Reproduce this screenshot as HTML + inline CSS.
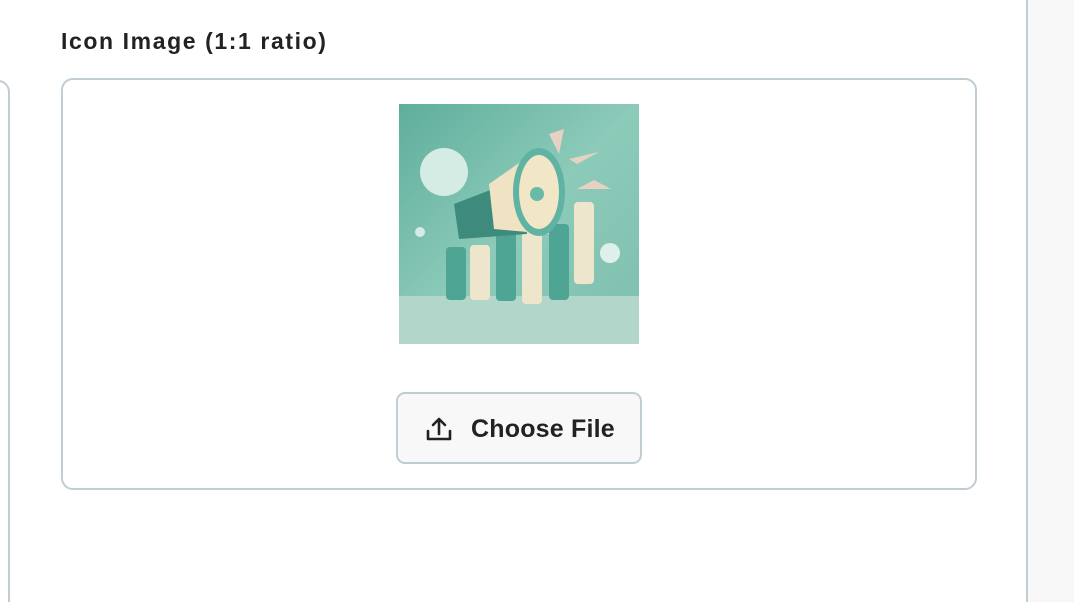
<!DOCTYPE html>
<html><head><meta charset="utf-8"><style>
html,body{margin:0;width:1074px;height:602px;overflow:hidden;background:#fff;font-family:"Liberation Sans",sans-serif}
.right{position:absolute;left:1026px;top:0;width:48px;height:602px;background:#f8f8f8;border-left:2px solid #c0ced3;box-sizing:border-box}
.leftbox{position:absolute;left:-20px;top:80px;width:30px;height:522px;border:2px solid #c0ced3;border-bottom:none;border-radius:12px 12px 0 0;box-sizing:border-box}
.label{position:absolute;left:61px;top:28px;font-size:23px;font-weight:bold;color:#222;letter-spacing:1.6px}
.box{position:absolute;left:61px;top:78px;width:916px;height:412px;border:2px solid #c0ced3;border-radius:12px;box-sizing:border-box}
.img{position:absolute;left:399px;top:104px;width:240px;height:240px}
.btn{position:absolute;left:396px;top:392px;width:246px;height:72px;border:2px solid #c0ced3;border-radius:9px;background:#f8f8f8;box-sizing:border-box;font-size:25px;font-weight:bold;color:#222}
.btn span{position:absolute;left:73px;top:21px;letter-spacing:0.2px}
.btn svg{position:absolute;left:27px;top:21px}
</style></head><body>
<div class="leftbox"></div>
<div class="right"></div>
<div class="label">Icon Image (1:1 ratio)</div>
<div class="box"></div>
<svg class="img" viewBox="0 0 240 240">
<defs><linearGradient id="bg" x1="0" y1="0" x2="1" y2="1"><stop offset="0" stop-color="#5fae9c"/><stop offset="0.5" stop-color="#8ccab9"/><stop offset="1" stop-color="#7fbfae"/></linearGradient></defs>
<rect width="240" height="240" fill="url(#bg)"/>
<rect y="192" width="240" height="48" fill="#b3d6ca"/>
<circle cx="45" cy="68" r="24" fill="#d4ece4"/>
<circle cx="21" cy="128" r="5" fill="#d4ece4"/>
<circle cx="211" cy="149" r="10" fill="#dff0ea"/>
<rect x="47" y="143" width="20" height="53" rx="4" fill="#4fa593"/>
<rect x="71" y="141" width="20" height="55" rx="4" fill="#eee6cc"/>
<rect x="97" y="128" width="20" height="69" rx="4" fill="#4fa593"/>
<rect x="123" y="125" width="20" height="75" rx="4" fill="#eee6cc"/>
<rect x="150" y="120" width="20" height="76" rx="4" fill="#4fa593"/>
<rect x="175" y="98" width="20" height="82" rx="4" fill="#eee6cc"/>
<path d="M55 100 L120 75 L128 130 L60 135 Z" fill="#3e8a7c"/>
<path d="M90 80 L140 45 L150 130 L95 125 Z" fill="#efe3c3"/>
<ellipse cx="140" cy="88" rx="26" ry="44" fill="#5fb3a2"/>
<ellipse cx="140" cy="88" rx="20" ry="37" fill="#f1e6c6"/>
<circle cx="138" cy="90" r="7" fill="#6bb9a8"/>
<path d="M150 30 L160 50 L165 25 Z M170 55 L200 48 L178 60 Z M178 85 L212 85 L195 76 Z" fill="#e6d2c2"/>
</svg>
<div class="btn"><svg width="28" height="28" viewBox="0 0 28 28" fill="none" stroke="#222" stroke-width="2.6" stroke-linecap="round" stroke-linejoin="round"><path d="M3 16v8h22v-8"/><path d="M14 19V4M8 10l6-6 6 6"/></svg><span>Choose File</span></div>
</body></html>
